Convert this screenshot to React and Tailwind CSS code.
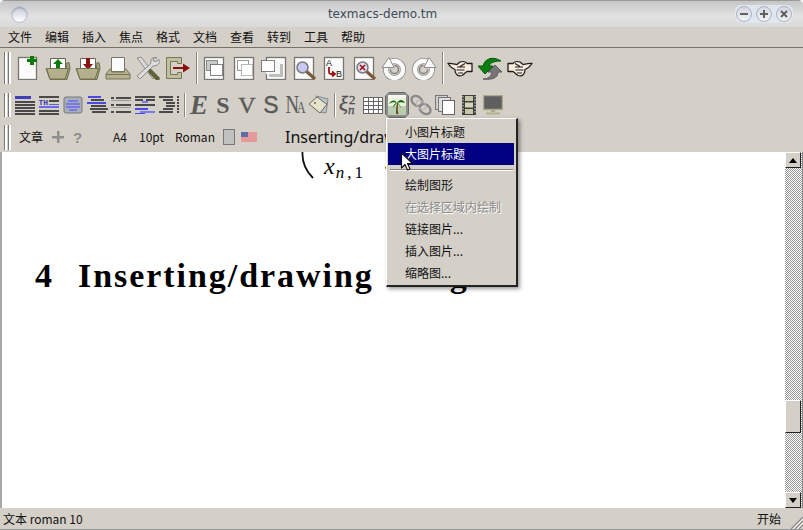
import React from "react";

const cjk = { fontFamily: '"Noto Sans CJK SC", "Noto Sans", sans-serif' };
const S = ({ w = 30, h = 24, children, cls = "" }) => (
  <div className={`flex items-center justify-center shrink-0 ${cls}`} style={{ width: w }}>
    <svg width="26" height={h} viewBox={`0 0 26 ${h}`} className="block">{children}</svg>
  </div>
);
const Grip = ({ h }) => (
  <div className="ml-[4px] mr-[2px] flex gap-[1px] shrink-0" style={{ height: h }}>
    <div className="w-[2px] bg-white border-l border-[#777] box-content" />
    <div className="w-[2px] bg-white border-l border-[#777] box-content" />
  </div>
);
const Sep = ({ h }) => (
  <div className="w-[2px] ml-[3px] mr-[1px] bg-white border-l border-[#8a867e] shrink-0" style={{ height: h }} />
);
const Page = ({ x = 3, w = 19, y = 1, h = 22 }) => (
  <rect x={x + 0.5} y={y + 0.5} width={w} height={h} fill="#fbfbfb" stroke="#777570" strokeWidth="1.300" />
);
const Folder = ({ children }) => (
  <>
    <path d="M5.500 2.500h15v14h-15z" fill="#fff" stroke="#66645e" />
    {children}
    <path d="M1 12.500h6l1 2h14l-1-7 3-1 1 6-3 11H5z" fill="#a5a27c" stroke="#6e6c50" />
    <path d="M1.500 12.500h22l-3.500 10.500H5z" fill="#b3b08c" stroke="#74724f" />
  </>
);
const Bars = ({ rows }) => (
  <svg width="22" height="20" viewBox="0 0 22 20" className="block">
    {rows.map((r, i) => (
      <rect key={i} x={r[0]} y={r[1]} width={r[2]} height={r[3] || 2} fill={r[4] || "#4a4a4a"} />
    ))}
  </svg>
);
const Slot = ({ w = 24, children }) => (
  <div className="flex items-center justify-center shrink-0 h-[24px]" style={{ width: w }}>{children}</div>
);
const Hand = ({ flip }) => (
  <g transform={flip ? "translate(26 0) scale(-1 1)" : ""}>
    <path d="M1 7.500c3-.500 6 .500 9 1l3-2.500c3-1 6 0 7 1.500h5v8h-5c-2 1-3 3-5 4-3 1-5 0-6-2-1-1-1-3-1-4-3-1-5-3-7-6z" fill="#faecdc" stroke="#1c1c1c" strokeWidth="1.300" strokeLinejoin="round" />
    <path d="M10 11h8M9.500 14h8M11 17h5M18 7.500l-5 3" stroke="#1c1c1c" fill="none" strokeWidth="1.200" />
  </g>
);
const Spin = ({ flip }) => (
  <g transform={flip ? "translate(26 0) scale(-1 1)" : ""}>
    <circle cx="13.500" cy="13.500" r="8.500" fill="none" stroke="#8f8f8f" strokeWidth="6" />
    <circle cx="13.500" cy="13.500" r="8.500" fill="none" stroke="#fafafa" strokeWidth="4.300" />
    <path d="M13.500 9.500a4 4 0 1 1-4 4" fill="none" stroke="#7a7a7a" strokeWidth="1.300" />
    <path d="M1 11.500L8 1.500l5 10z" fill="#fafafa" stroke="#8f8f8f" strokeLinejoin="round" />
  </g>
);
const menuNames = ["文件", "编辑", "插入", "焦点", "格式", "文档", "查看", "转到", "工具", "帮助"];

const Row1 = () => (
  <div className="h-[40px] flex items-center">
    <Grip h={32} />
    <S>
      <Page x={3} w={18} y={1} h={22} />
      <path d="M15 0h4v3h3v3h-3v3h-4V6h-3V3h3z" fill="#0a7a0a" />
    </S>
    <S><Folder><path d="M13 3l5 5h-3v6h-4V8H8z" fill="#0a7a0a" /></Folder></S>
    <S><Folder><path d="M11 2h4v6h3l-5 6-5-6h3z" fill="#8a1414" /></Folder></S>
    <S>
      <path d="M6.500 1.500h13v14h-13z" fill="#fbfbfb" stroke="#77756c" />
      <path d="M5 13h1.500v3h13v-3H21l4 5v5H1v-5z" fill="#b5b28f" stroke="#77755a" />
      <path d="M1 18.500h24" stroke="#77755a" />
    </S>
    <S>
      <path d="M2 2l4-1 15 19-3 3z" fill="#d8d8d8" stroke="#8d8d8d" />
      <path d="M22 2c-3-1-6 0-6 3l-.500 3L2 20l3 3 13-13 3-.500c3-1 4-3 3-6l-3 2-3-1 1-3z" fill="#dedede" stroke="#8a8a8a" strokeLinejoin="round" />
      <path d="M15.500 15.500l7 7" stroke="#5f6238" strokeWidth="4.500" strokeLinecap="round" />
    </S>
    <S>
      <path d="M1.500 1.500h15v6h-4v-2h-7v13h7v-2h4v6h-15z" fill="#c2bf9d" stroke="#77755a" />
      <path d="M8 12h12" stroke="#8a1010" strokeWidth="2" />
      <path d="M18 7.500l7 4.500-7 4.500z" fill="#8a1010" />
    </S>
    <Sep h={32} />
    <S>
      <Page x={3} w={19} />
      <rect x="5.500" y="4.500" width="11" height="10" fill="#c9c9c5" stroke="#333" strokeDasharray="1 1" />
      <rect x="9.500" y="8.500" width="12" height="11" fill="#fff" stroke="#111" strokeDasharray="1 1" />
    </S>
    <S>
      <Page x={3} w={19} />
      <rect x="6.500" y="4.500" width="11" height="10" fill="#fff" stroke="#333" strokeDasharray="1 1" />
      <rect x="10.500" y="8.500" width="11" height="11" fill="#fff" stroke="#777" strokeDasharray="1 1" />
    </S>
    <S>
      <Page x={5} w={19} />
      <rect x="8" y="8" width="14" height="13" fill="#bdbdb9" />
      <rect x="5" y="6" width="14" height="12" fill="#f6f6f6" />
      <rect x="0.500" y="4.500" width="13" height="11" fill="#fff" stroke="#111" strokeDasharray="1 1" />
    </S>
    <S>
      <Page x={3} w={19} />
      <path d="M15 15l9 8" stroke="#7d5a3a" strokeWidth="3.200" />
      <circle cx="11.500" cy="11.500" r="5.500" fill="#c9c8f2" stroke="#7a7a7a" strokeWidth="1.500" />
    </S>
    <S>
      <Page x={3} w={19} />
      <text x="5" y="10" fontSize="9" fontFamily="Liberation Sans" fill="#111">A</text>
      <text x="15" y="21" fontSize="9" fontFamily="Liberation Sans" fill="#111">B</text>
      <path d="M8 11v5c0 2 1 2 3 2h2M11 15.500l3 2.500-3 2.500" fill="none" stroke="#a01010" strokeWidth="1.800" />
    </S>
    <S>
      <Page x={3} w={19} />
      <path d="M15 15l9 8" stroke="#7d5a3a" strokeWidth="3.200" />
      <circle cx="11.500" cy="11.500" r="5.500" fill="#dcdcf2" stroke="#7a7a7a" strokeWidth="1.500" />
      <path d="M9 9l5 5M14 9l-5 5" stroke="#a01010" strokeWidth="1.600" />
    </S>
    <S><Spin /></S>
    <S><Spin flip /></S>
    <Sep h={32} />
    <S><Hand /></S>
    <S>
      <path d="M6 23c5 0 8-2 9-7h-4l7-7 7 7h-4c0 6-6 8-15 7z" fill="#777" stroke="#5a5a5a" />
      <path d="M24 5C16 0 8 2 6 10H1l7 8 8-8h-4c1-3 5-5 12-5z" fill="#0d7d12" stroke="#065a0a" />
    </S>
    <S><Hand flip /></S>
  </div>
);

const Row2 = () => (
  <div className="h-[34px] flex items-center">
    <Grip h={24} />
    <Slot><Bars rows={[[1, 1, 16, 3, "#3f3fb8"], [1, 6, 20], [1, 9, 20], [1, 12, 20], [1, 15, 20], [1, 18, 20]]} /></Slot>
    <Slot>
      <svg width="22" height="20" viewBox="0 0 22 20">
        <rect x="1" y="1" width="20" height="2" fill="#4a4a4a" />
        <text x="0.500" y="10" fontSize="8" fontWeight="bold" fontFamily="Liberation Mono" fill="#3c3cb4">TH</text>
        <rect x="11" y="5" width="10" height="2" fill="#4a4a4a" />
        <rect x="11" y="9" width="10" height="1" fill="#5c5ce0" />
        <rect x="1" y="11" width="20" height="2" fill="#6a6ae8" />
        <rect x="1" y="15" width="20" height="2" fill="#4a4a4a" />
        <rect x="1" y="18" width="20" height="2" fill="#4a4a4a" />
      </svg>
    </Slot>
    <Slot>
      <svg width="20" height="18" viewBox="0 0 20 18">
        <rect x="1" y="1" width="18" height="16" rx="2" fill="#a9aebb" stroke="#777" />
        <path d="M5 5h10M3 8h14M3 11h14M6 14h8" stroke="#6a6aee" strokeWidth="1.500" />
      </svg>
    </Slot>
    <Slot><Bars rows={[[2, 1, 13, 2, "#4a4ae0"], [5, 4, 13], [1, 7, 19, 2, "#4a4ae0"], [5, 10, 15], [4, 13, 18], [6, 16, 14]]} /></Slot>
    <Slot><Bars rows={[[1, 2, 3], [6, 2, 15], [1, 5, 20, 1, "#999"], [1, 9, 3], [6, 9, 15], [1, 12, 20, 1, "#999"], [1, 16, 3], [6, 16, 15]]} /></Slot>
    <Slot><Bars rows={[[1, 1, 20], [1, 4, 8], [12, 4, 9], [8, 6, 6, 2, "#7a7af0"], [1, 9, 20], [1, 13, 13, 2, "#4a4ae0"], [6, 16, 15, 2, "#7a7af0"], [1, 18, 10, 1, "#4a4ae0"]]} /></Slot>
    <Slot><Bars rows={[[1, 1, 14], [19, 1, 2], [5, 4, 10], [19, 4, 2], [8, 7, 9], [19, 7, 2], [8, 10, 9], [19, 10, 2], [5, 13, 10], [19, 13, 2], [1, 16, 14], [19, 16, 2]]} /></Slot>
    <Sep h={24} />
    <Slot><span className="text-[27px] italic font-bold text-[#5a5a5a] leading-none" style={{ fontFamily: '"Liberation Serif", serif' }}>E</span></Slot>
    <Slot><span className="text-[24px] font-bold text-[#5a5a5a] leading-none" style={{ fontFamily: '"Liberation Serif", serif' }}>S</span></Slot>
    <Slot><span className="text-[24px] text-[#5a5a5a] leading-none [-webkit-text-stroke:0.4px_#5a5a5a]" style={{ fontFamily: '"Liberation Serif", serif' }}>V</span></Slot>
    <Slot><span className="text-[23px] text-[#5a5a5a] leading-none [-webkit-text-stroke:0.4px_#5a5a5a]" style={{ fontFamily: '"Liberation Sans", sans-serif' }}>S</span></Slot>
    <Slot><span className="inline-block scale-x-[0.72] text-[26px] text-[#5a5a5a] leading-none tracking-[-3px] whitespace-nowrap" style={{ fontFamily: '"Liberation Serif", serif' }}>N<span className="text-[17px]">A</span></span></Slot>
    <Slot>
      <svg width="22" height="20" viewBox="0 0 22 20">
        <path d="M8 1l12 3-2 14-6-1z" fill="#b8c6d0" stroke="#888" />
        <path d="M1 9l8-7 8 6 2 1-7 9z" fill="#e6e2cc" stroke="#6a6a5c" />
        <circle cx="7" cy="8" r="1" fill="#6a6a5c" />
      </svg>
    </Slot>
    <Sep h={24} />
    <Slot>
      <svg width="20" height="24" viewBox="0 0 20 24" fill="#4f4f4f" stroke="#4f4f4f" strokeWidth="0.300" fontFamily="Liberation Serif" className="overflow-visible">
        <text x="0" y="18" fontSize="21" fontStyle="italic">ξ</text>
        <text x="10" y="11" fontSize="13">2</text>
        <text x="9" y="21" fontSize="13" fontStyle="italic">n</text>
      </svg>
    </Slot>
    <Slot>
      <svg width="20" height="17" viewBox="0 0 20 17">
        <rect x="0.500" y="0.500" width="19" height="16" fill="#fff" stroke="#666" />
        <path d="M0 4.500h20M0 8.500h20M0 12.500h20M5.500 0v17M10.500 0v17M15.500 0v17" stroke="#666" />
      </svg>
    </Slot>
    <Slot>
      <div className="w-[24px] h-[26px] flex items-center justify-center bg-[#8c8c8c] border border-[#666] rounded-[4px] [clip-path:polygon(4px_0,20px_0,24px_4px,24px_22px,20px_26px,4px_26px,0_22px,0_4px)]">
        <svg width="18" height="20" viewBox="0 0 18 20">
          <rect x="0" y="0" width="18" height="20" fill="#eef0dc" />
          <rect x="0" y="0" width="18" height="3" fill="#f6f6ee" />
          <rect x="0" y="11" width="18" height="9" fill="#b9cdb0" />
          <path d="M8 19c0-4 0-7 1-11h1.500c-1 4-1 7 0 11z" fill="#6b4a20" />
          <path d="M9 8C7 4 3 5 1 9c3-2 5-2 8-1zM9 8c2-4 6-4 8 0-3-1-5-1-8 0zM9 8c-2 0-4 2-4 5 1-2 3-4 4-5zM9 8c2 1 4 3 4 5-1-2-3-4-4-5z" fill="#0f6b10" />
        </svg>
      </div>
    </Slot>
    <Slot>
      <svg width="22" height="22" viewBox="0 0 22 22" fill="none">
        <ellipse cx="7" cy="7" rx="6" ry="4.500" transform="rotate(40 7 7)" stroke="#8a8a8a" strokeWidth="2.400" />
        <ellipse cx="15" cy="15" rx="6" ry="4.500" transform="rotate(40 15 15)" stroke="#8a8a8a" strokeWidth="2.400" />
        <ellipse cx="11" cy="11" rx="5.500" ry="3.500" transform="rotate(40 11 11)" stroke="#b5b5b5" strokeWidth="1.200" />
      </svg>
    </Slot>
    <Slot>
      <svg width="20" height="20" viewBox="0 0 20 20">
        <rect x="0.500" y="0.500" width="12" height="14" fill="#cfcfcf" stroke="#777" />
        <rect x="3.500" y="2.500" width="12" height="14" fill="#dfdfdf" stroke="#777" />
        <rect x="7.500" y="5.500" width="12" height="14" fill="#fff" stroke="#666" />
      </svg>
    </Slot>
    <Slot>
      <svg width="14" height="20" viewBox="0 0 14 20">
        <rect x="0" y="0" width="14" height="20" fill="#3f3f3f" />
        <rect x="3" y="1" width="8" height="5" fill="#c8c6a8" />
        <rect x="3" y="7.500" width="8" height="5" fill="#d8d6b8" />
        <rect x="3" y="14" width="8" height="5" fill="#c8c6a8" />
        <path d="M1 1v18M13 1v18" stroke="#ddd" strokeWidth="1" strokeDasharray="1.500 1.500" />
      </svg>
    </Slot>
    <Slot>
      <svg width="20" height="20" viewBox="0 0 20 20">
        <rect x="0.500" y="0.500" width="19" height="14" fill="#5f5f5f" stroke="#aaa988" strokeWidth="1.500" />
        <path d="M8 15h4v2H8z" fill="#aaa988" />
        <path d="M3 17.500h14v2H3z" fill="#b2b190" />
      </svg>
    </Slot>
  </div>
);

const Row3 = () => (
  <div className="h-[30px] flex items-center text-[12px] text-[#111]" style={cjk}>
    <Grip h={25} />
    <span className="ml-[6px] w-[33px] shrink-0">文章</span>
    <svg width="12" height="12" viewBox="0 0 12 12" className="shrink-0"><path d="M5 0h2.500v5H12v2.500H7.500V12H5V7.500H0V5h5z" fill="#8e8e8e" /></svg>
    <span className="ml-[9px] w-[40px] shrink-0 text-[15px] font-bold text-[#8e8e8e] leading-none" style={{ fontFamily: '"Liberation Sans", sans-serif' }}>?</span>
    <span className="ml-0 w-[26px] shrink-0">A4</span>
    <span className="w-[36px] shrink-0">10pt</span>
    <span className="w-[48px] shrink-0">Roman</span>
    <div className="w-[12px] h-[16px] bg-[#c0c0c0] border border-[#777] shrink-0" />
    <svg width="16" height="10" viewBox="0 0 16 10" className="ml-[6px] shrink-0">
      <rect width="16" height="10" fill="#f2b8b8" />
      <path d="M0 1h16M0 3h16M0 5h16M0 7h16M0 9h16" stroke="#d87a7a" />
      <rect width="7" height="5" fill="#5c6fa8" />
    </svg>
    <span className="ml-[28px] text-[16px] leading-none whitespace-nowrap" style={{ fontFamily: '"Noto Sans", sans-serif' }}>Inserting/draw</span>
  </div>
);

const items = [
  { t: "小图片标题" },
  { t: "大图片标题", active: true },
  { sep: true },
  { t: "绘制图形" },
  { t: "在选择区域内绘制", off: true },
  { t: "链接图片..." },
  { t: "插入图片..." },
  { t: "缩略图..." },
];

const Menu = () => (
  <div className="absolute left-[386px] top-[118px] w-[132px] h-[169px] bg-[#d4d0c8] border-t border-l border-t-white border-l-white border-r-2 border-b-2 border-r-[#222] border-b-[#222] pt-[2px] pl-[1px] shadow-[2px_2px_4px_rgba(0,0,0,0.4)] text-[12px]" style={cjk}>
    {items.map((it, i) =>
      it.sep ? (
        <div key={i} className="h-[9px] flex items-center px-[2px] w-[127px]">
          <div className="w-full h-[2px] bg-white border-t border-[#8a867e]" />
        </div>
      ) : (
        <div
          key={i}
          className={`h-[22px] w-[126px] flex items-center pl-[17px] ${it.active ? "bg-[#000080] text-white" : it.off ? "text-[#8a8a8a] [text-shadow:1px_1px_0_#fff]" : "text-[#111]"}`}
        >
          {it.t}
        </div>
      )
    )}
  </div>
);

const Cursor = () => (
  <svg width="16" height="20" viewBox="0 0 16 20" className="absolute left-[400px] top-[152px]">
    <path d="M1.500 1v15l3.500-3.500 2.500 5.500 2.500-1-2.500-5.500h5z" fill="#fff" stroke="#111" strokeWidth="1.100" strokeLinejoin="round" />
  </svg>
);

const ScrollBtn = ({ up }) => (
  <div className="h-[16px] w-[16px] bg-[#d4d0c8] border-t border-l border-t-white border-l-white border-r border-b border-r-[#222] border-b-[#222] flex items-center justify-center shrink-0">
    <svg width="8" height="5" viewBox="0 0 8 5"><path d={up ? "M4 0l4 5H0z" : "M0 0h8L4 5z"} fill="#000" /></svg>
  </div>
);

export default function App() {
  return (
    <div className="relative w-[803px] h-[530px] overflow-hidden flex flex-col bg-[#d4d0c8] rounded-t-[5px]" style={{ fontFamily: '"Noto Sans", sans-serif' }}>
      <div className="h-[27px] shrink-0 flex items-center border-t border-[#9a9a9a] bg-gradient-to-b from-[#c6c6c6] via-[#e2e2e2] via-60% to-[#d9d9d9] relative">
        <div className="ml-[11px] w-[17px] h-[17px] rounded-full border border-[#b8c0d4] bg-gradient-to-b from-[#c8ccd6] to-white shadow-[inset_0_1px_2px_rgba(90,100,130,0.5)] shrink-0" />
        <div className="flex-1 text-center text-[12px] text-[#3d4b56] pl-[2px]" style={{ fontFamily: '"DejaVu Sans", sans-serif' }}>texmacs-demo.tm</div>
        <div className="mr-[10px] flex gap-[4px] items-center rounded-[6px] bg-[#e0e6ee] px-[1px] py-[1px] shrink-0">
          {[
            <path d="M3 7h8" />,
            <path d="M3 7h8M7 3v8" />,
            <path d="M4 4l6 6M10 4l-6 6" />,
          ].map((p, i) => (
            <div key={i} className="w-[16px] h-[16px] rounded-full border border-[#aab2c8] bg-gradient-to-b from-[#d4d8e0] to-[#f2f2f2] flex items-center justify-center">
              <svg width="14" height="14" viewBox="0 0 14 14" fill="none" stroke="#606060" strokeWidth="2">{p}</svg>
            </div>
          ))}
        </div>
      </div>

      <div className="h-[21px] shrink-0 flex items-center pl-[8px] gap-[14px] border-b border-[#77736b] text-[12px] text-[#111]" style={cjk}>
        {menuNames.map((m) => <span key={m} className="w-[23px] whitespace-nowrap">{m}</span>)}
      </div>

      <div className="shrink-0 h-[104px] overflow-hidden">
        <Row1 />
        <Row2 />
        <Row3 />
      </div>

      <div className="flex-1 flex min-h-0 border-l-2 border-r border-l-[#a8a8a8] border-r-[#8a8a8a]">
        <div className="flex-1 bg-white overflow-hidden text-black" style={{ fontFamily: '"Liberation Serif", serif' }}>
          <div className="h-[28px] flex items-start ml-[298px]">
            <svg width="16" height="28" viewBox="0 0 16 28" className="shrink-0" fill="none"><path d="M2.500 0C2 9 6 19 13 26" stroke="#111" strokeWidth="1.800" /></svg>
            <span className="ml-[8px] mt-[1px] text-[24px] italic leading-[26px] whitespace-nowrap">x<span className="text-[17px] relative top-[4px] tracking-[3px] ml-[1px]">n<span className="not-italic">,1</span></span></span>
            <span className="ml-[18px] text-[20px] leading-[20px]">.</span>
          </div>
          <div className="mt-[78px] ml-[33px] flex items-baseline text-[34px] font-bold leading-[36px] whitespace-nowrap">
            <span className="w-[43px]">4</span>
            <span className="tracking-[1.95px] [word-spacing:5px]">Inserting/drawing images</span>
          </div>
        </div>
        <div className="w-[17px] shrink-0 flex flex-col bg-[repeating-conic-gradient(#9a9a9a_0_25%,#ffffff_0_50%)] bg-[length:2px_2px]">
          <ScrollBtn up />
          <div className="flex-1 min-h-0 pt-[232px]">
            <div className="h-[33px] w-[16px] bg-[#d4d0c8] border-t border-l border-t-white border-l-white border-r border-b border-r-[#222] border-b-[#222]" />
          </div>
          <ScrollBtn />
        </div>
      </div>

      <div className="h-[22px] shrink-0 flex items-center pl-[3px] text-[12px] text-[#111] border-t border-b border-t-[#d4d0c8] border-b-[#999] relative" style={cjk}>
        <span className="flex-1">文本 roman 10</span>
        <span className="mr-[22px]">开始</span>
        <svg width="13" height="13" viewBox="0 0 13 13" className="absolute right-0 bottom-0">
          <path d="M13 1L1 13M13 5L5 13M13 9L9 13" stroke="#8a8a8a" strokeWidth="1.200" />
          <path d="M13 3L3 13M13 7L7 13" stroke="#fff" />
        </svg>
      </div>

      <Menu />
      <Cursor />
    </div>
  );
}
